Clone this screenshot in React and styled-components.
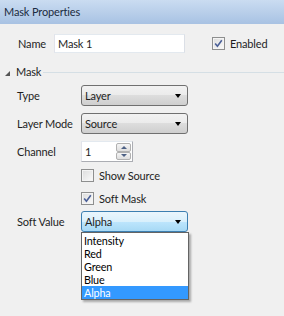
import React from 'react';
import styled, { createGlobalStyle } from 'styled-components';

const GlobalStyle = createGlobalStyle`
  html, body {
    margin: 0;
    padding: 0;
    background: #f0f0f0;
  }
  body {
    font-family: Lato, "Liberation Sans", sans-serif;
    font-size: 11px;
    letter-spacing: -0.15px;
    line-height: 14px;
    color: #1e1e1e;
  }
`;

const softValues = ['Intensity', 'Red', 'Green', 'Blue', 'Alpha'];

const CheckMark = () => (
  <svg width="9" height="9" viewBox="0 0 9 9">
    <path d="M1.2 4.6 L3.4 7.2 L7.8 1.2" fill="none" stroke="#4a5f97" strokeWidth="1.6" />
  </svg>
);

const Checkbox = ({ checked, label }) => (
  <CheckRow>
    <CheckBox>{checked && <CheckMark />}</CheckBox>
    <span>{label}</span>
  </CheckRow>
);

const Combo = ({ value, active }) => (
  <ComboBox active={active}>
    <span>{value}</span>
    <Arrow />
  </ComboBox>
);

const App = () => (
  <Panel>
    <GlobalStyle />
    <Header>Mask Properties</Header>
    <NameRow>
      <NameLabel>Name</NameLabel>
      <TextInput>Mask 1</TextInput>
      <Checkbox checked label="Enabled" />
    </NameRow>
    <Section>
      <SectionTitle>
        <Triangle />
        <span>Mask</span>
        <Rule />
      </SectionTitle>
      <Form>
        <Label>Type</Label>
        <Combo value="Layer" />
        <Label>Layer Mode</Label>
        <Combo value="Source" />
        <Label>Channel</Label>
        <Spinner>
          <span>1</span>
          <SpinButtons>
            <SpinButton>
              <SpinArrow up />
            </SpinButton>
            <SpinButton>
              <SpinArrow />
            </SpinButton>
          </SpinButtons>
        </Spinner>
        <span />
        <CheckGroup>
          <Checkbox label="Show Source" />
          <Checkbox checked label="Soft Mask" />
        </CheckGroup>
        <Label>Soft Value</Label>
        <ComboWrap>
          <Combo value="Alpha" active />
          <DropList>
            {softValues.map(v => (
              <DropItem key={v} selected={v === 'Alpha'}>{v}</DropItem>
            ))}
          </DropList>
        </ComboWrap>
      </Form>
    </Section>
  </Panel>
);

const Panel = styled.div`
  width: 284px;
  height: 316px;
  background: #f0f0f0;
  overflow: hidden;
`;

const Header = styled.div`
  height: 24px;
  box-sizing: border-box;
  padding: 0 4px;
  display: flex;
  align-items: center;
  background: linear-gradient(#cadcf1, #a8c2e3);
  color: #1b2b40;
`;

const NameRow = styled.div`
  display: flex;
  align-items: center;
  padding: 10px 0 0 18px;
  height: 19px;
`;

const NameLabel = styled.span`
  width: 36px;
`;

const TextInput = styled.div`
  width: 131px;
  height: 19px;
  box-sizing: border-box;
  border: 1px solid #abadb3;
  border-top-color: #e3e9ef;
  border-left-color: #e2e3ea;
  border-right-color: #dbdfe6;
  border-bottom-color: #e3e9ef;
  background: #fff;
  padding: 0 3px;
  display: flex;
  align-items: center;
  margin-right: 27px;
`;

const CheckRow = styled.div`
  display: flex;
  align-items: center;
  gap: 5px;
  height: 13px;
  white-space: nowrap;
`;

const CheckGroup = styled.div`
  display: flex;
  flex-direction: column;
  gap: 10px;
  margin-bottom: -1px;
`;

const CheckBox = styled.div`
  width: 13px;
  height: 13px;
  box-sizing: border-box;
  border: 1px solid #8e8f8f;
  background: linear-gradient(135deg, #dcdcdc, #fbfbfb);
  box-shadow: inset 0 0 0 1px #f4f4f4;
  display: flex;
  align-items: center;
  justify-content: center;
`;

const Section = styled.div`
  padding-top: 12px;
`;

const SectionTitle = styled.div`
  display: flex;
  align-items: center;
  height: 14px;
  padding-left: 5px;
  gap: 6px;
`;

const Triangle = styled.div`
  width: 0;
  height: 0;
  border-left: 5px solid transparent;
  border-bottom: 5px solid #555;
  margin-top: 2px;
`;

const Rule = styled.div`
  flex: 1;
  height: 1px;
  background: #d5dfe5;
  margin-left: -4px;
`;

const Form = styled.div`
  display: grid;
  grid-template-columns: 64px 107px;
  align-items: center;
  row-gap: 7px;
  padding: 6px 0 0 17px;
`;

const Label = styled.span`
  white-space: nowrap;
`;

const ComboWrap = styled.div`
  position: relative;
`;

const ComboBox = styled.div`
  height: 21px;
  box-sizing: border-box;
  border: 1px solid ${props => props.active ? '#3c7fb1' : '#707070'};
  border-radius: 3px;
  background: ${props => props.active
    ? 'linear-gradient(#eaf6fd 0%, #d9f0fc 50%, #bee6fd 50%, #a7d9f5 100%)'
    : 'linear-gradient(#f2f2f2 0%, #ebebeb 50%, #dddddd 50%, #cfcfcf 100%)'
  };
  display: flex;
  align-items: center;
  justify-content: space-between;
  padding: 0 6px 0 3px;
`;

const Arrow = styled.div`
  width: 0;
  height: 0;
  border-left: 3.5px solid transparent;
  border-right: 3.5px solid transparent;
  border-top: 4px solid #000;
`;

const Spinner = styled.div`
  width: 52px;
  height: 21px;
  box-sizing: border-box;
  border: 1px solid #abadb3;
  border-top-color: #e3e9ef;
  border-left-color: #e2e3ea;
  background: #fff;
  display: flex;
  align-items: center;
  justify-content: space-between;
  padding: 0 1px 0 3px;
`;

const SpinButtons = styled.div`
  display: flex;
  flex-direction: column;
  width: 15px;
  height: 17px;
`;

const SpinButton = styled.div`
  flex: 1;
  box-sizing: border-box;
  border: 1px solid #b1b1b1;
  border-radius: 2px;
  background: linear-gradient(#f5f5f5, #dedede);
  display: flex;
  align-items: center;
  justify-content: center;
`;

const SpinArrow = styled.div`
  width: 0;
  height: 0;
  border-left: 3px solid transparent;
  border-right: 3px solid transparent;
  ${props => props.up
    ? 'border-bottom: 3px solid #4d6185;'
    : 'border-top: 3px solid #4d6185;'}
`;

const DropList = styled.div`
  position: absolute;
  top: 21px;
  left: 0;
  width: 108px;
  box-sizing: border-box;
  border: 1px solid #646464;
  background: #fff;
  box-shadow: 2px 2px 2px rgba(0, 0, 0, 0.3);
  padding: 1px 0 0;
  z-index: 2;
`;

const DropItem = styled.div`
  height: 13px;
  line-height: 13px;
  font-size: 10.8px;
  padding: 0 2px;
  background: ${props => props.selected ? '#3399ff' : 'transparent'};
  color: ${props => props.selected ? '#fff' : '#000'};
`;

export default App;
